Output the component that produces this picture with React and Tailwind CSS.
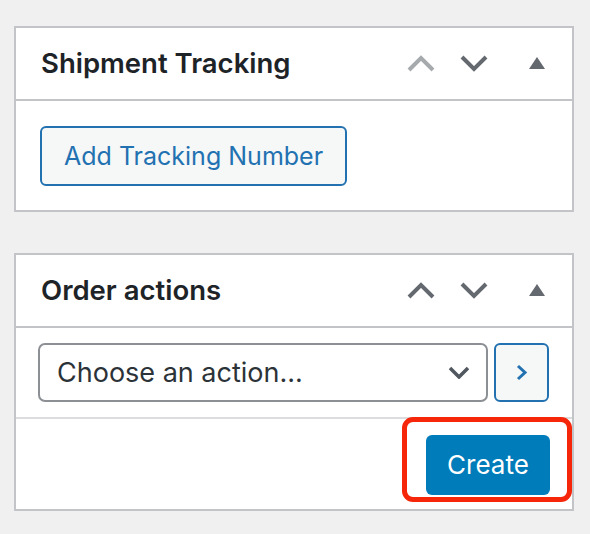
import React from "react";

const font = { fontFamily: 'Inter, "Noto Sans", sans-serif' };

function Chevron({ dir = "up", color }) {
  const pts = dir === "up" ? "2,15 14,3 26,15" : "2,2 14,14 26,2";
  return (
    <svg width="28" height="17" viewBox="0 0 28 17" className="block">
      <polyline points={pts} fill="none" stroke={color} strokeWidth="4" strokeLinejoin="miter" />
    </svg>
  );
}

function Triangle() {
  return (
    <svg width="16" height="12" viewBox="0 0 16 12" className="block">
      <polygon points="8,0 16,12 0,12" fill="#646970" />
    </svg>
  );
}

function Header({ title, upColor }) {
  return (
    <div className="flex h-[73px] items-center border-b-2 border-[#c3c4c7] pl-[25px]">
      <h2 className="text-[27.5px] font-semibold text-[#1d2327] leading-none" style={font}>
        {title}
      </h2>
      <div className="ml-auto flex items-center pr-[27px]">
        <div className="mr-[25px]"><Chevron dir="up" color={upColor} /></div>
        <div className="mr-[41px]"><Chevron dir="down" color="#646970" /></div>
        <div className="mb-[2px]"><Triangle /></div>
      </div>
    </div>
  );
}

export default function App() {
  return (
    <div className="min-h-[534px] w-[590px] bg-[#f0f0f1] pl-[14px] pt-[26px]" style={font}>
      <div className="w-[560px] border-2 border-[#c3c4c7] bg-white">
        <Header title="Shipment Tracking" upColor="#a7aaad" />
        <div className="pl-[24px] pt-[25px] pb-[24px]">
          <button className="h-[60px] rounded-[6px] border-2 border-[#2271b1] bg-[#f6f7f7] px-[22px] text-[25px] text-[#2271b1] leading-none" style={font}>
            Add Tracking Number
          </button>
        </div>
      </div>

      <div className="mt-[41px] w-[560px] border-2 border-[#c3c4c7] bg-white">
        <Header title="Order actions" upColor="#646970" />
        <div className="flex items-center gap-[6px] border-b-2 border-[#dcdcde] pl-[22px] pt-[15px] pb-[15px]">
          <div className="flex h-[59px] w-[450px] items-center rounded-[7px] border-2 border-[#8c8f94] pl-[17px] pr-[16px]">
            <span className="text-[27px] text-[#2c3338] leading-none" style={font}>Choose an action...</span>
            <svg width="22" height="13" viewBox="0 0 22 13" className="ml-auto block">
              <polyline points="2,2 11,11 20,2" fill="none" stroke="#50575e" strokeWidth="3.5" />
            </svg>
          </div>
          <button className="flex h-[59px] w-[55px] items-center justify-center rounded-[6px] border-2 border-[#2271b1] bg-[#f6f7f7]">
            <svg width="12" height="17" viewBox="0 0 12 17" className="block">
              <polyline points="2,2 9,8.5 2,15" fill="none" stroke="#2271b1" strokeWidth="3" />
            </svg>
          </button>
        </div>
        <div className="relative flex justify-end pr-[22px] pt-[16px] pb-[14px]">
          <button className="h-[60px] w-[124px] rounded-[6px] bg-[#007cba] text-[26px] text-white leading-none" style={font}>
            Create
          </button>
          <div className="pointer-events-none absolute left-[386px] top-[-2px] h-[85px] w-[170px] rounded-[11px] border-[5px] border-[#f5260a]" />
        </div>
      </div>
    </div>
  );
}
